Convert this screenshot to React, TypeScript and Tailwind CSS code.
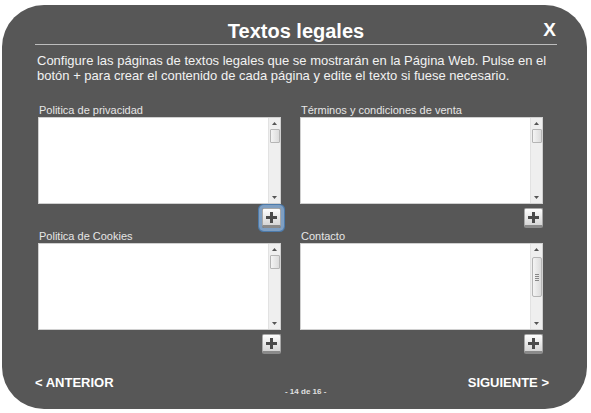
import React from 'react';

type FieldProps = {
  label: string;
  focused?: boolean;
  bigThumb?: boolean;
};

const Arrow: React.FC<{ up?: boolean }> = ({ up }) => (
  <svg width="5" height="3" viewBox="0 0 5 3" className="shrink-0">
    <path d={up ? 'M0 3 L2.5 0 L5 3 Z' : 'M0 0 L2.5 3 L5 0 Z'} fill="#555" />
  </svg>
);

const Scrollbar: React.FC<{ bigThumb?: boolean }> = ({ bigThumb }) => (
  <div className="w-[12px] h-full bg-[#efefef] border-l border-[#e2e2e2] flex flex-col items-center py-[4px]">
    <Arrow up />
    {bigThumb ? (
      <div className="mt-[6px] w-[10px] h-[40px] rounded-[2px] border border-[#b5b5b5] bg-gradient-to-r from-[#f4f4f4] to-[#dcdcdc] flex flex-col items-center justify-center gap-[1px]">
        <div className="w-[4px] h-px bg-[#888]" />
        <div className="w-[4px] h-px bg-[#888]" />
        <div className="w-[4px] h-px bg-[#888]" />
        <div className="w-[4px] h-px bg-[#888]" />
      </div>
    ) : (
      <div className="mt-[4px] w-[10px] h-[14px] rounded-[1px] border border-[#b5b5b5] bg-gradient-to-r from-[#f4f4f4] to-[#dcdcdc]" />
    )}
    <div className="flex-1" />
    <Arrow />
  </div>
);

const PlusButton: React.FC<{ focused?: boolean }> = ({ focused }) => (
  <button
    className={
      'w-[19px] h-[20px] rounded-[2px] border border-[#a8a8a8] border-b-[3px] border-b-[#8a8a8a] bg-gradient-to-b from-[#fdfdfd] to-[#d6d6d6] flex items-center justify-center ' +
      (focused ? 'shadow-[0_0_0_3px_#7f9fc2,0_0_0_4px_#4d7bab]' : '')
    }
  >
    <svg width="11" height="11" viewBox="0 0 11 11">
      <path d="M4 0 H7 V4 H11 V7 H7 V11 H4 V7 H0 V4 H4 Z" fill="#4a4a4a" />
    </svg>
  </button>
);

const Field: React.FC<FieldProps> = ({ label, focused, bigThumb }) => (
  <div className="flex flex-col">
    <span className="text-[11px] leading-[14px] text-[#e6e6e6] pl-[1px]">{label}</span>
    <div className="h-[87px] bg-white border border-[#d0d0d0] flex justify-end">
      <Scrollbar bigThumb={bigThumb} />
    </div>
    <div className="flex justify-end mt-[4px]">
      <PlusButton focused={focused} />
    </div>
  </div>
);

const App: React.FC = () => {
  return (
    <div className="w-[591px] h-[413px] bg-white pt-[5px] pl-[2px] font-['Liberation_Sans',Arial,sans-serif]">
      <div className="w-[585px] h-[404px] rounded-[42px] bg-[#575757] pl-[33px] pr-[30px] flex flex-col">
        <div className="relative pt-[14px] h-[40px] border-b border-[#bdbdbd]">
          <h1 className="text-center text-[20px] leading-[24px] font-bold text-white">Textos legales</h1>
          <span className="absolute right-[1px] top-[13px] text-[19px] leading-[24px] font-bold text-white">X</span>
        </div>

        <p className="mt-[8px] pl-[2px] text-[13px] leading-[15px] text-[#f2f2f2]">
          Configure las páginas de textos legales que se mostrarán en la Página Web. Pulse en el botón + para crear el contenido de cada página y edite el texto si fuese necesario.
        </p>

        <div className="mt-[20px] pl-[3px] pr-[14px] grid grid-cols-2 gap-x-[19px] gap-y-[1px]">
          <Field label="Politica de privacidad" focused />
          <Field label="Términos y condiciones de venta" />
          <Field label="Politica de Cookies" />
          <Field label="Contacto" bigThumb />
        </div>

        <div className="mt-[21px] flex justify-between items-start pr-[8px]">
          <span className="text-[13px] leading-[16px] font-bold text-white">&lt; ANTERIOR</span>
          <span className="mt-[12px] ml-[30px] text-[8px] leading-[10px] font-bold text-[#e0e0e0]">- 14 de 16 -</span>
          <span className="text-[13px] leading-[16px] font-bold text-white">SIGUIENTE &gt;</span>
        </div>
      </div>
    </div>
  );
};

export default App;
